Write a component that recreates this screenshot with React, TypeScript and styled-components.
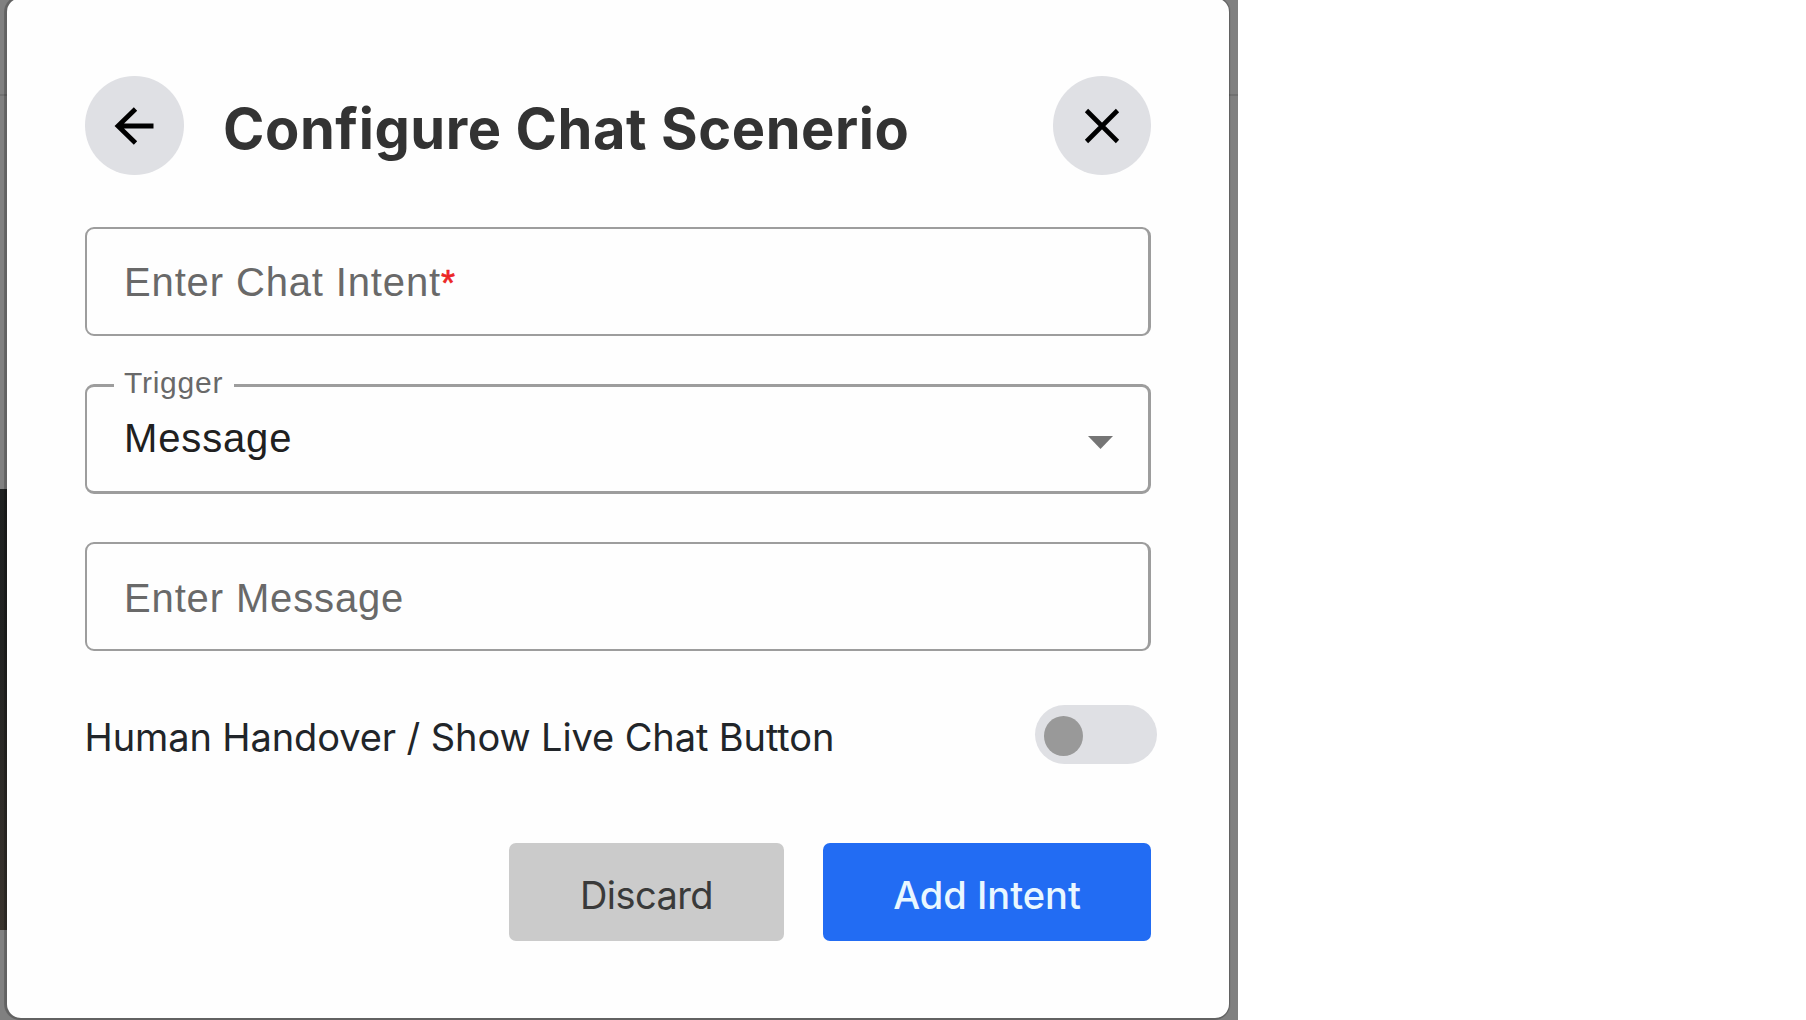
import React, { useState } from "react";
import styled, { createGlobalStyle } from "styled-components";

const GlobalStyle = createGlobalStyle`
  *, *::before, *::after { box-sizing: border-box; }
  html, body { margin: 0; background: #fff; overflow: hidden; }
`;

const ui = `"Inter", "Liberation Sans", sans-serif`;
const form = `"Liberation Sans", Arial, sans-serif`;

const Backdrop = styled.div`
  width: 1238px;
  height: 1020px;
  padding: 0 9px 0 7px;
  overflow: hidden;
  background:
    linear-gradient(#1f2121, #222322 35%, #3a342e) 0 489px / 20px 441px no-repeat,
    linear-gradient(#717171, #717171) 0 94px / 100% 2px no-repeat,
    #808080;
`;

const Dialog = styled.section`
  display: flex;
  flex-direction: column;
  height: 1020px;
  margin-top: -2px;
  padding: 78px 78px 0;
  border-radius: 14px;
  background: #fefefe;
  box-shadow: -1px 0 0 2px rgba(0, 0, 0, 0.2), 0 0 0 2px rgba(0, 0, 0, 0.04);
`;

const Header = styled.header`
  display: flex;
  align-items: center;
  height: 99px;
`;

const RoundButton = styled.button`
  display: grid;
  place-items: center;
  flex: none;
  width: 98.5px;
  height: 99px;
  padding: 0;
  border: 0;
  border-radius: 50%;
  background: #dfe0e4;
`;

const Title = styled.h1`
  flex: 1;
  margin: 0;
  padding: 6px 0 0 39.5px;
  font: 700 56px/68px ${ui};
  letter-spacing: 0.57px;
  white-space: nowrap;
  color: #333;
`;

const Fields = styled.div`
  display: flex;
  flex-direction: column;
  gap: 48px;
  margin-top: 52px;
`;

const Field = styled.div<{ $edge: number; $nudge: number }>`
  position: relative;
  display: flex;
  align-items: center;
  justify-content: space-between;
  height: ${(p) => 107 + p.$edge}px;
  padding: ${(p) => Math.max(0, p.$nudge)}px 35px ${(p) => Math.max(0, -p.$nudge)}px 37px;
  border: solid #9d9d9d;
  border-width: ${(p) => p.$edge}px 3px ${(p) => p.$edge}px 2px;
  border-radius: 9px;
`;

const FieldText = styled.span<{ $filled?: boolean }>`
  font: 400 40px/46px ${form};
  letter-spacing: 0.86px;
  white-space: nowrap;
  color: ${(p) => (p.$filled ? "#202020" : "#696969")};
`;

const Required = styled.span`
  font-size: 36px;
  -webkit-text-stroke: 0.6px #ec2626;
  color: #ec2626;
`;

const FloatingLabel = styled.span`
  position: absolute;
  top: -21px;
  left: 27px;
  width: 120px;
  padding-left: 10px;
  background: #fefefe;
  font: 400 30px/34px ${form};
  letter-spacing: 0.75px;
  color: #696969;
`;

const Caret = styled.span`
  width: 25px;
  height: 13px;
  margin-top: 9px;
  background: #757575;
  clip-path: polygon(0 0, 100% 0, 50% 100%);
`;

const ToggleRow = styled.div`
  display: flex;
  align-items: center;
  justify-content: space-between;
  height: 59px;
  margin: 54px -6px 0 -0.5px;
`;

const ToggleLabel = styled.span`
  padding-top: 5px;
  font: 400 38px/46px ${ui};
  letter-spacing: -0.1px;
  white-space: nowrap;
  color: #212529;
`;

const Switch = styled.button<{ $on: boolean }>`
  display: flex;
  align-items: center;
  justify-content: ${(p) => (p.$on ? "flex-end" : "flex-start")};
  width: 122px;
  height: 59px;
  padding: 3px 9px 0;
  border: 0;
  border-radius: 30px;
  background: #dfe0e4;
`;

const Thumb = styled.span`
  width: 39px;
  height: 40px;
  border-radius: 50%;
  background: #999;
`;

const Actions = styled.footer`
  display: flex;
  justify-content: flex-end;
  gap: 39px;
  margin-top: 79px;
`;

const ActionButton = styled.button<{ $primary?: boolean }>`
  width: ${(p) => (p.$primary ? 328 : 275)}px;
  height: 98px;
  padding: 6px 0 0;
  border: 0;
  border-radius: 7px;
  background: ${(p) => (p.$primary ? "#226cf3" : "#cbcbcb")};
  color: ${(p) => (p.$primary ? "#e9f7ff" : "#3a3a3a")};
  font: ${(p) => (p.$primary ? 500 : 400)} 38px/46px ${ui};
  letter-spacing: ${(p) => (p.$primary ? 0 : -0.55)}px;
`;

const ArrowIcon = () => (
  <svg width="98" height="98" viewBox="0 0 98 98" fill="none" stroke="#000" strokeWidth="4.8">
    <path d="M68.5 49H33M50.5 32 33 49 50.5 66" />
  </svg>
);

const CloseIcon = () => (
  <svg width="98" height="98" viewBox="0 0 98 98" fill="none" stroke="#000" strokeWidth="4.6">
    <path d="M33.5 33.5 64.5 64.5M64.5 33.5 33.5 64.5" />
  </svg>
);

export default function App() {
  const [handover, setHandover] = useState(false);
  return (
    <>
      <GlobalStyle />
      <Backdrop>
        <Dialog role="dialog">
          <Header>
            <RoundButton aria-label="Back"><ArrowIcon /></RoundButton>
            <Title>Configure Chat Scenerio</Title>
            <RoundButton aria-label="Close"><CloseIcon /></RoundButton>
          </Header>
          <Fields>
            <Field $edge={2} $nudge={2}>
              <FieldText>Enter Chat Intent<Required>*</Required></FieldText>
            </Field>
            <Field $edge={3} $nudge={-2}>
              <FloatingLabel>Trigger</FloatingLabel>
              <FieldText $filled>Message</FieldText>
              <Caret />
            </Field>
            <Field $edge={2} $nudge={2}>
              <FieldText>Enter Message</FieldText>
            </Field>
          </Fields>
          <ToggleRow>
            <ToggleLabel>Human Handover / Show Live Chat Button</ToggleLabel>
            <Switch role="switch" aria-checked={handover} $on={handover} onClick={() => setHandover(!handover)}>
              <Thumb />
            </Switch>
          </ToggleRow>
          <Actions>
            <ActionButton>Discard</ActionButton>
            <ActionButton $primary>Add Intent</ActionButton>
          </Actions>
        </Dialog>
      </Backdrop>
    </>
  );
}
